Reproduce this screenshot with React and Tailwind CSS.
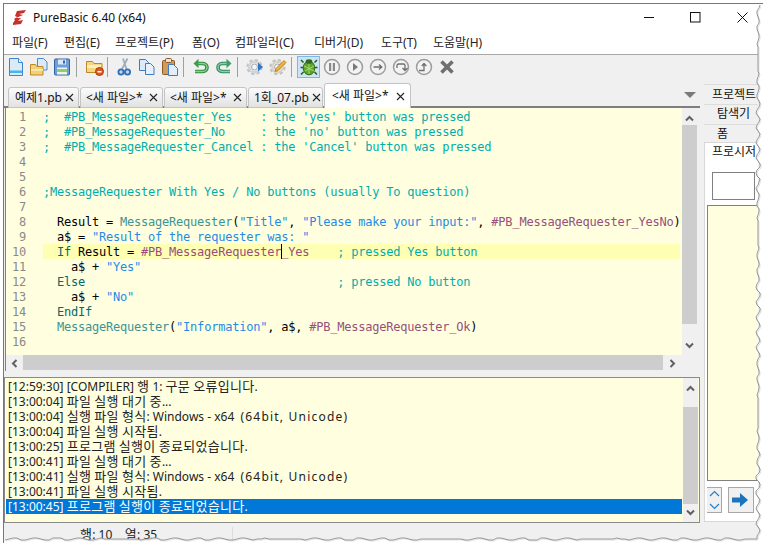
import React from 'react';

const UI_FONT = 'font-["Noto_Sans","Noto_Sans_CJK_KR",sans-serif]';

const C = 'text-[#00adad]';   // comments
const S = 'text-[#1e8be6]';   // strings
const K = 'text-[#006b6b]';   // keywords
const F = 'text-[#3d9494]';   // functions
const P = 'text-[#96507a]';   // constants
const N = 'text-[#000000]';

const CODE = [
  [[';  #PB_MessageRequester_Yes    : the \'yes\' button was pressed', C]],
  [[';  #PB_MessageRequester_No     : the \'no\' button was pressed', C]],
  [[';  #PB_MessageRequester_Cancel : the \'Cancel\' button was pressed', C]],
  [],
  [],
  [[';MessageRequester With Yes / No buttons (usually To question)', C]],
  [],
  [['  Result = ', N], ['MessageRequester', F], ['(', N], ['"Title"', S], [', ', N], ['"Please make your input:"', S], [', ', N], ['#PB_MessageRequester_YesNo', P], [')', N]],
  [['  a$ = ', N], ['"Result of the requester was: "', S]],
  [['  ', N], ['If', K], [' Result = ', N], ['#PB_MessageRequester_Yes', P], ['    ', N], ['; pressed Yes button', C]],
  [['    a$ + ', N], ['"Yes"', S]],
  [['  ', N], ['Else', K], ['                                    ', N], ['; pressed No button', C]],
  [['    a$ + ', N], ['"No"', S]],
  [['  ', N], ['EndIf', K]],
  [['  ', N], ['MessageRequester', F], ['(', N], ['"Information"', S], [', a$, ', N], ['#PB_MessageRequester_Ok', P], [')', N]],
  [],
];

const LOG = [
  '[12:59:30] [COMPILER] 행 1: 구문 오류입니다.',
  '[13:00:04] 파일 실행 대기 중...',
  '[13:00:04] 실행 파일 형식: Windows - x64  (64bit, Unicode)',
  '[13:00:04] 파일 실행 시작됨.',
  '[13:00:25] 프로그램 실행이 종료되었습니다.',
  '[13:00:41] 파일 실행 대기 중...',
  '[13:00:41] 실행 파일 형식: Windows - x64  (64bit, Unicode)',
  '[13:00:41] 파일 실행 시작됨.',
  '[13:00:45] 프로그램 실행이 종료되었습니다.',
];

const MENUS = [
  ['파일(F)', 'w-[52px]'], ['편집(E)', 'w-[51px]'], ['프로젝트(P)', 'w-[77px]'], ['폼(O)', 'w-[43px]'],
  ['컴파일러(C)', 'w-[79px]'], ['디버거(D)', 'w-[67px]'], ['도구(T)', 'w-[52px]'], ['도움말(H)', 'w-[62px]'],
];

const TABS = [
  ['예제1.pb', 'w-[71px] pl-[6px] pr-[4px]'],
  ['<새 파일>*', 'w-[83px] pl-[5px] pr-[4px]'],
  ['<새 파일>*', 'w-[83px] pl-[5px] pr-[4px]'],
  ['1회_07.pb', 'w-[75px] pl-[5px] pr-[1px]'],
];

// hangul runs sit a size larger than the latin around them
function Ko({ text }) {
  return text.split(/([\uac00-\ud7a3]+|\(64bit, Unicode\))/).map((part, i) => {
    if (i % 2 === 0) return part;
    if (part[0] === '(') return <span key={i} className="tracking-[1.2px]">{part}</span>;
    return <span key={i} className="text-[13px] tracking-[0.3px]">{part}</span>;
  });
}

// torn screenshot edge, same every render
function tornEdge() {
  const pts = [];
  for (let y = 5; y < 538; y += 3) pts.push([758 + Math.round(Math.sin(y * 1.7) * 1.2 + Math.sin(y * 0.43)), y]);
  for (let x = 757; x > 3; x -= 4) pts.push([x, 539 + Math.round(Math.sin(x * 1.3) * 0.9 + Math.sin(x * 0.31) * 0.6)]);
  return pts.map(p => p.join(',')).join(' ');
}

function Torn() {
  const line = tornEdge();
  return (
    <svg className="absolute inset-0 pointer-events-none" width="770" height="550">
      <polygon points={`770,4 ${line} 3,550 770,550`} fill="#ffffff" />
      <polyline points={line} fill="none" stroke="#9a9a9a" strokeWidth="1" />
      <polyline points={line} fill="none" stroke="#000000" strokeOpacity="0.12" strokeWidth="1" transform="translate(1,1)" />
    </svg>
  );
}

const Ico = ({ children, size = 18 }) => (
  <svg width={size} height={size} viewBox="0 0 18 18" fill="none">{children}</svg>
);

const IconNew = () => (
  <Ico>
    <path d="M2.500 .5h9l4 4v13h-13z" fill="#dbe9f9" stroke="#3d84cc" />
    <path d="M11.500 .5v4h4" fill="#ffffff" stroke="#3d84cc" />
    <rect x="3" y="12.500" width="12" height="2.500" fill="#45b6ee" />
  </Ico>
);
const IconOpen = () => (
  <Ico>
    <path d="M7.500 .5h6l3.500 3.500v8h-9.500z" fill="#dbe9f9" stroke="#4a8ad0" />
    <path d="M.5 6.500h5l1.500 2h6v8.500h-12.500z" fill="#f7cf70" stroke="#b98a2a" />
    <rect x="1" y="11" width="12" height="2" fill="#fbe7ae" />
  </Ico>
);
const IconSave = () => (
  <Ico>
    <rect x="1.500" y="1" width="15" height="16" rx="1" fill="#6f9fdb" stroke="#34619f" />
    <rect x="5" y="1.500" width="8" height="5" fill="#dce8f6" />
    <rect x="10" y="2.500" width="2" height="3" fill="#34619f" />
    <rect x="4" y="9.500" width="10" height="7" fill="#eef4ea" />
    <rect x="4" y="11" width="10" height="3" fill="#8fce6a" />
  </Ico>
);
const IconCloseAll = () => (
  <Ico>
    <path d="M.5 3.500h6l1.500 2h8v9h-15.500z" fill="#f8d47e" stroke="#b98a2a" />
    <rect x="1" y="7" width="14" height="3" fill="#fbedc4" />
    <circle cx="13.500" cy="13.500" r="4" fill="#dd5a1e" stroke="#a83c0e" />
    <rect x="11.500" y="13" width="4" height="1.500" fill="#ffffff" />
  </Ico>
);
const IconCut = () => (
  <Ico>
    <path d="M12.500 .5L7 11M8 .5l3.500 10.500" stroke="#a3adb8" strokeWidth="1.800" />
    <circle cx="6" cy="14" r="2.600" stroke="#2f6fb5" strokeWidth="1.800" fill="#bfd6ee" />
    <circle cx="12.500" cy="14" r="2.600" stroke="#2f6fb5" strokeWidth="1.800" fill="#bfd6ee" />
  </Ico>
);
const IconCopy = () => (
  <Ico>
    <path d="M1.500 1.500h6l3 3v8h-9z" fill="#dbe9f9" stroke="#3d7cc4" />
    <path d="M7.500 5.500h5l3.500 3.500v7.500h-8.500z" fill="#e6f0fb" stroke="#3d7cc4" />
  </Ico>
);
const IconPaste = () => (
  <Ico>
    <rect x="1.500" y="2.500" width="12" height="14" rx="1" fill="#d39a5c" stroke="#8a5a26" />
    <rect x="4.500" y=".5" width="6" height="4" rx="1" fill="#ece3d2" stroke="#8a5a26" />
    <path d="M7.500 6.500h5l4 4v7h-9z" fill="#e3eefb" stroke="#3d7cc4" />
  </Ico>
);
const IconUndo = () => (
  <Ico>
    <path d="M5 5.500h6a4 4 0 0 1 0 8H3" stroke="#2e8b3e" strokeWidth="3.600" />
    <path d="M5 5.500h6a4 4 0 0 1 0 8H3" stroke="#8ad08e" strokeWidth="1.400" />
    <path d="M6.500 .8v9.400l-5-4.700z" fill="#3d9e4c" />
  </Ico>
);
const IconRedo = () => (
  <Ico>
    <path d="M12 5.500H7a4 4 0 0 0 0 8h8" stroke="#2e8b5e" strokeWidth="3.600" />
    <path d="M12 5.500H7a4 4 0 0 0 0 8h8" stroke="#8ad0a8" strokeWidth="1.400" />
    <path d="M11.500 .8v9.400l5-4.700z" fill="#3d9e6c" />
  </Ico>
);
const IconCompile = () => (
  <Ico>
    <circle cx="8.500" cy="9" r="6.600" stroke="#c0c4c8" strokeWidth="3" strokeDasharray="3 2.200" />
    <circle cx="8.500" cy="9" r="5.300" stroke="#d0d3d6" strokeWidth="2.400" />
    <circle cx="8.500" cy="9" r="3" fill="#f4f4f4" stroke="#a4a8ad" />
    <path d="M12 4.500v9l5-4.500z" fill="#2f78c8" />
  </Ico>
);
const IconOptions = () => (
  <Ico>
    <circle cx="8.500" cy="9" r="6.600" stroke="#c2beb6" strokeWidth="3" strokeDasharray="3 2.200" />
    <circle cx="8.500" cy="9" r="5.300" stroke="#d6d2c8" strokeWidth="2.400" />
    <circle cx="8.500" cy="9" r="3" fill="#f4f4f4" stroke="#a4a8ad" />
    <path d="M15 2.500l2 2-8 8-3 1 1-3z" fill="#f2b632" stroke="#a8741a" strokeWidth=".8" />
  </Ico>
);
const IconBug = () => (
  <Ico>
    <path d="M3.500 4.500L1 2M14.500 4.500L17 2M3 9.500H.5M15 9.500h2.500M3.500 14L1 16.500M14.500 14l2.500 2.500" stroke="#2c5a12" strokeWidth="1.500" />
    <ellipse cx="9" cy="10" rx="5.800" ry="6.800" fill="#5fa52c" stroke="#2f6a14" />
    <path d="M4 8l10 5M14 8L5 13M9 4v12" stroke="#a7d96e" strokeWidth="1" />
    <ellipse cx="9" cy="3.500" rx="3.300" ry="2.300" fill="#2f6a14" />
  </Ico>
);
const Round = ({ children }) => (
  <Ico>
    <circle cx="9" cy="9" r="7.500" fill="#f3f3f3" stroke="#9c9c9c" strokeWidth="1.500" />
    {children}
  </Ico>
);
const IconPause = () => <Round><rect x="6" y="5" width="2.200" height="8" fill="#8a8a8a" /><rect x="9.800" y="5" width="2.200" height="8" fill="#8a8a8a" /></Round>;
const IconRun = () => <Round><path d="M7 5l5 4-5 4z" fill="#7a7a7a" /></Round>;
const IconStep = () => <Round><path d="M4.500 9h8M10 6.500L12.800 9 10 11.500" stroke="#6f6f6f" strokeWidth="1.300" /></Round>;
const IconStepOver = () => <Round><path d="M5 10V7.500a1.500 1.500 0 0 1 1.500-1.500h5a1.500 1.500 0 0 1 1.500 1.500V12M10.500 10l2.500 2.500 2.500-2.500" stroke="#6f6f6f" strokeWidth="1.300" /></Round>;
const IconStepOut = () => <Round><path d="M4 12.500h5V6M6.800 8L9 5.500 11.300 8" stroke="#6f6f6f" strokeWidth="1.300" /></Round>;
const IconKill = () => (
  <Ico>
    <path d="M3.500 3.500l11 11M14.500 3.500l-11 11" stroke="#6f6f6f" strokeWidth="3.600" />
  </Ico>
);

const Btn = ({ children }) => <div className="w-[23px] h-[22px] flex items-center justify-center shrink-0">{children}</div>;
const Sep = ({ className }) => <div className={`w-px h-[20px] mt-[1px] bg-[#a0a0a0] shrink-0 ${className}`} />;

function Toolbar() {
  return (
    <div className="h-[27px] pt-[1px] bg-[#f0f0f0] flex items-start shrink-0">
      <Btn><IconNew /></Btn><Btn><IconOpen /></Btn><Btn><IconSave /></Btn>
      <Sep className="ml-[3px] mr-[6px]" />
      <Btn><IconCloseAll /></Btn>
      <Sep className="ml-[1px] mr-[4px]" />
      <Btn><IconCut /></Btn><Btn><IconCopy /></Btn><Btn><IconPaste /></Btn>
      <Sep className="ml-[2px] mr-[5px]" />
      <Btn><IconUndo /></Btn><Btn><IconRedo /></Btn>
      <Sep className="ml-[2px] mr-[5px]" />
      <Btn><IconCompile /></Btn><Btn><IconOptions /></Btn>
      <Sep className="ml-[2px] mr-[5px]" />
      <div className="w-[23px] h-[22px] flex items-center justify-center shrink-0 bg-[#cce4f7] border border-[#7ab8ea]"><IconBug /></div>
      <Btn><IconPause /></Btn><Btn><IconRun /></Btn><Btn><IconStep /></Btn><Btn><IconStepOver /></Btn><Btn><IconStepOut /></Btn><Btn><IconKill /></Btn>
    </div>
  );
}

const TabX = () => (
  <svg width="9" height="9" viewBox="0 0 9 9" className="shrink-0"><path d="M1 1l7 7M8 1L1 8" stroke="#222222" strokeWidth="1.100" /></svg>
);

function Tabs() {
  return (
    <div className="h-[26px] bg-[#f0f0f0] flex items-end pl-[4px] border-b-2 border-[#7f7f7f] shrink-0">
      {TABS.map(([label, w], i) => (
        <div key={i} className={`${w} h-[21px] -mb-[2px] mr-[1px] shrink-0 flex items-center justify-between border border-[#c4c4c4] rounded-t-[3px] bg-gradient-to-b from-[#fbfbfb] to-[#e2e2e2] text-[12px] text-[#111111] whitespace-nowrap`}>
          <span>{label}</span><TabX />
        </div>
      ))}
      <div className="w-[87px] h-[25px] -mb-[2px] shrink-0 flex items-center justify-between pl-[7px] pr-[5px] border border-[#c4c4c4] border-b-0 rounded-t-[3px] bg-white text-[12px] text-[#111111] whitespace-nowrap z-10">
        <span>{'<새 파일>*'}</span><TabX />
      </div>
      <div className="ml-auto mr-[4px] mb-[8px]">
        <svg width="12" height="6" viewBox="0 0 12 6"><path d="M0 0h12L6 6z" fill="#7a7a7a" /></svg>
      </div>
    </div>
  );
}

const Chev = ({ d }) => (
  <svg width="9" height="9" viewBox="0 0 9 9"><path d={d} fill="none" stroke="#606060" strokeWidth="2" /></svg>
);
const UP = 'M1 6.500L4.500 3 8 6.500';
const DOWN = 'M1 2.500L4.500 6 8 2.500';
const LEFT = 'M6.500 1L3 4.500 6.500 8';
const RIGHT = 'M2.500 1L6 4.500 2.500 8';

function VScroll({ thumb }) {
  return (
    <div className="w-[15px] shrink-0 bg-[#f0f0f0] flex flex-col items-center">
      <div className="h-[17px] pt-[3px] flex items-center justify-center shrink-0"><Chev d={UP} /></div>
      <div className={`w-full bg-[#cdcdcd] shrink-0 ${thumb}`} />
      <div className="flex-1 flex items-end justify-center pb-[5px]"><Chev d={DOWN} /></div>
    </div>
  );
}

function Editor() {
  return (
    <div className="h-[247px] flex shrink-0">
      <div className="flex-1 min-w-0 bg-[#ffffdf] overflow-hidden pl-[2px] pt-[1px] font-['DejaVu_Sans_Mono',monospace] text-[12px] tracking-[-0.22px] leading-[17px]">
        {CODE.map((toks, i) => (
          <div key={i} className="flex h-[15px]">
            <div className="w-[18px] text-right text-[#8a8a8a] shrink-0">{i + 1}</div>
            <div className={`ml-[17px] mr-[2px] flex-1 h-[15px] whitespace-pre relative ${i === 9 ? 'bg-[#ffffb4]' : ''}`}>
              {toks.map(([t, c], j) => <span key={j} className={c}>{t}</span>)}
              {i === 9 && <span className="absolute left-[238px] top-0 w-px h-[15px] bg-black" />}
            </div>
          </div>
        ))}
      </div>
      <VScroll thumb="h-[199px]" />
    </div>
  );
}

function HScroll() {
  return (
    <div className="h-[16px] flex shrink-0 bg-[#f0f0f0]">
      <div className="w-[17px] flex items-center justify-center shrink-0"><Chev d={LEFT} /></div>
      <div className="w-[640px] h-[15px] bg-[#cdcdcd] shrink-0" />
      <div className="flex-1 flex items-center pl-[5px]"><Chev d={RIGHT} /></div>
    </div>
  );
}

function Log() {
  return (
    <div className={`h-[146px] border border-[#8a8a8a] pr-[1px] flex bg-[#ffffdf] shrink-0 ${UI_FONT}`}>
      <div className="flex-1 min-w-0 pt-[1px] pl-[1px] text-[12px] leading-[15px] text-[#222222]">
        {LOG.map((l, i) => (
          <div key={i} className={`h-[15px] pl-[2px] whitespace-pre ${i === 8 ? 'bg-[#0078d7] text-white' : ''}`}><Ko text={l} /></div>
        ))}
      </div>
      <div className="w-px shrink-0" />
      <VScroll thumb="mt-[12px] h-[97px]" />
    </div>
  );
}

function SidePanel() {
  return (
    <div className="w-[54px] flex flex-col shrink-0 pt-[2px] text-[12px] text-[#111111] overflow-hidden">
      <div className="h-[21px] border-t border-b border-[#dcdcdc] whitespace-nowrap pl-[8px] leading-[19px]">프로젝트</div>
      <div className="h-[20px] border-b border-[#dcdcdc] whitespace-nowrap pl-[13px] leading-[18px]">탐색기</div>
      <div className="h-[17px] whitespace-nowrap pl-[13px] leading-[17px]">폼</div>
      <div className="h-[380px] shrink-0 bg-white border-l border-b border-t border-[#d8d8d8] flex flex-col">
        <div className="h-[22px] pl-[7px] leading-[18px] whitespace-nowrap">프로시저</div>
        <div className="ml-[7px] mt-[7px] w-[43px] h-[28px] border border-[#808080] bg-white shrink-0" />
        <div className="ml-[2px] mt-[5px] h-[276px] w-[60px] bg-[#ffffdf] border border-[#808080] shrink-0" />
        <div className="flex mt-[6px] ml-[2px] gap-[6px]">
          <div className="w-[15px] h-[26px] border border-l-0 border-[#a8a8a8] bg-[#f0f0f0] flex items-center justify-center">
            <svg width="11" height="20" viewBox="0 0 11 20"><path d="M1 6l4.500-4.500L10 6M1 14l4.500 4.500L10 14" fill="none" stroke="#1c7fd0" strokeWidth="1.200" /></svg>
          </div>
          <div className="w-[26px] h-[26px] border border-[#a8a8a8] bg-[#f0f0f0] flex items-center justify-center">
            <svg width="18" height="14" viewBox="0 0 18 14"><path d="M0 4.500h8V0l8 7-8 7V9.500H0z" fill="#1c74be" /></svg>
          </div>
        </div>
      </div>
    </div>
  );
}

export default function App() {
  return (
    <div className={`w-[770px] h-[550px] bg-white relative overflow-hidden text-[12px] pl-[3px] pt-[3px] ${UI_FONT}`}>
      <div className="w-[760px] h-[540px] border-l border-t border-[#777777] flex flex-col">
        <div className="h-[27px] bg-white flex items-center shrink-0 relative">
          <svg width="14" height="15" viewBox="0 0 14 15" className="ml-[9px]">
            <path d="M4 1l9-1-2 3-5 1 4 1-7 3 5 0-3 3 5-1-2 4-9 1 3-5-1-1 3-2-2-1z" fill="#c8302c" />
          </svg>
          <span className="ml-[6px] text-[12px] text-[#111111]">PureBasic 6.40 (x64)</span>
          <div className="absolute right-0 top-0 h-[27px] flex items-center">
            <svg width="11" height="11" viewBox="0 0 11 11" className="mr-[35px]"><path d="M0 5.500h10" stroke="#111111" /></svg>
            <svg width="11" height="11" viewBox="0 0 11 11" className="mr-[36px]"><rect x=".5" y=".5" width="9.500" height="9.500" fill="none" stroke="#111111" /></svg>
            <svg width="11" height="11" viewBox="0 0 11 11" className="mr-[15px]"><path d="M.5 .5l10 10M10.500 .5l-10 10" stroke="#111111" /></svg>
          </div>
        </div>
        <div className="h-[24px] bg-white flex items-center pl-[8px] border-b border-[#a8a8a8] shrink-0 text-[#222222]">
          {MENUS.map(([m, w]) => <div key={m} className={`${w} shrink-0 whitespace-nowrap`}>{m}</div>)}
        </div>
        <Toolbar />
        <div className="flex flex-1 min-h-0 bg-[#f0f0f0]">
          <div className="w-[696px] shrink-0 flex flex-col">
            <Tabs />
            <div className="ml-[1px] pr-[3px] border-l border-[#7f7f7f] flex flex-col">
              <Editor />
              <HScroll />
            </div>
            <div className="h-[6px] shrink-0" />
            <Log />
            <div className="flex-1 flex pt-[4px] pl-[76px] text-[12px] leading-[15px] text-[#222222] whitespace-pre">
              <span className="w-[153px] border-r border-[#dcdcdc] shrink-0"><Ko text="행: 10    열: 35" /></span>
            </div>
          </div>
          <div className="w-[4px] shrink-0" />
          <SidePanel />
        </div>
      </div>
      <Torn />
    </div>
  );
}
